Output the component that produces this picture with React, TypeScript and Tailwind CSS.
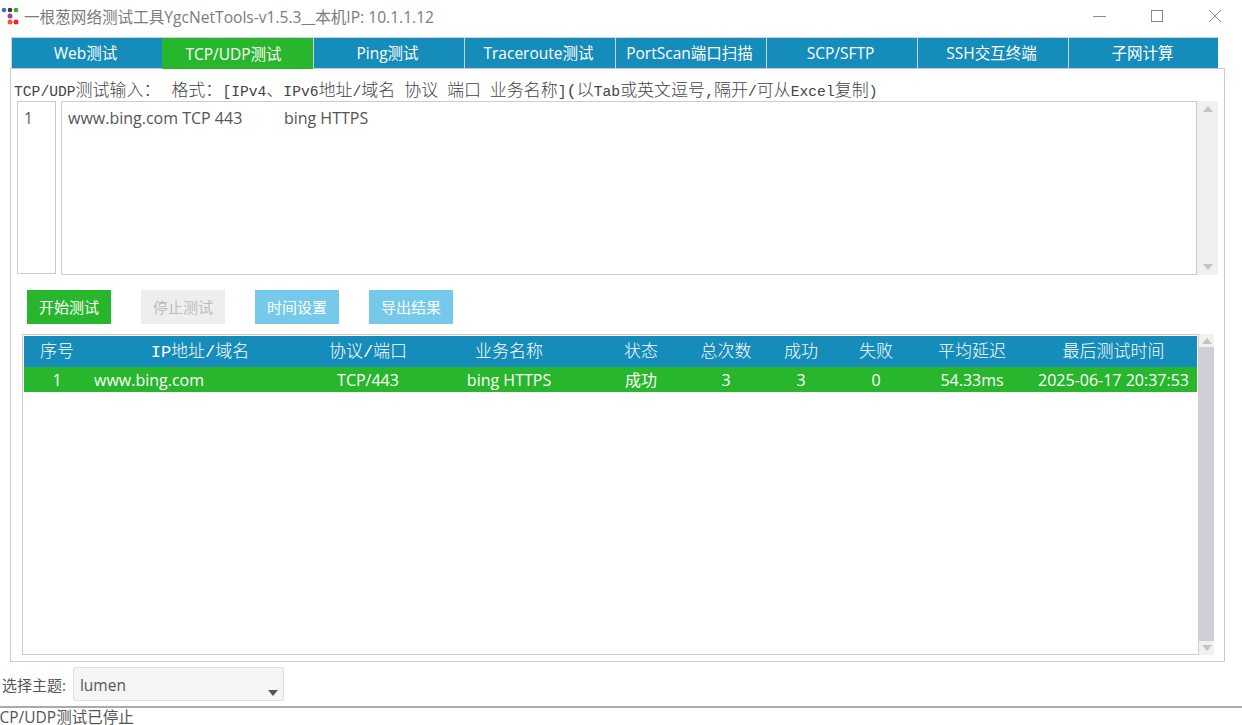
const tabs = ["Web测试", "TCP/UDP测试", "Ping测试", "Traceroute测试", "PortScan端口扫描", "SCP/SFTP", "SSH交互终端", "子网计算"];
const headers = ["序号", "IP地址/域名", "协议/端口", "业务名称", "状态", "总次数", "成功", "失败", "平均延迟", "最后测试时间"];
const row = ["1", "www.bing.com", "TCP/443", "bing HTTPS", "成功", "3", "3", "0", "54.33ms", "2025-06-17 20:37:53"];

const AppIcon = () => (
  <svg width="19" height="19" viewBox="0 0 19 19" className="shrink-0">
    <circle cx="3" cy="3" r="2.3" fill="#2f6fc5" />
    <circle cx="9" cy="3" r="2.3" fill="#3a3a3a" />
    <circle cx="15" cy="3" r="2.3" fill="#3aa63a" />
    <circle cx="9" cy="9" r="2.5" fill="#8e44ad" />
    <circle cx="9" cy="15" r="2.5" fill="#f0592a" />
    <circle cx="15" cy="15" r="2.5" fill="#e8262d" />
  </svg>
);

const Arrow = ({ down = false, color = "#c4c4c4" }: { down?: boolean; color?: string }) => (
  <svg width="10" height="6" viewBox="0 0 10 6">
    <path d={down ? "M0 0 L5 6 L10 0 Z" : "M0 6 L5 0 L10 6 Z"} fill={color} />
  </svg>
);

const Latin = ({ children }: { children: string }) => <span className="text-[14.67px]">{children}</span>;

const App = () => {
  return (
    <div className="w-[1242px] h-[725px] overflow-hidden bg-white flex flex-col font-['Open_Sans','Noto_Sans_CJK_SC',sans-serif] text-[#555]">
      {/* title bar */}
      <div className="h-[37px] shrink-0 flex items-start pt-[7px] pl-px">
        <AppIcon />
        <span className="ml-[4px] text-[15.6px] leading-[20px] text-[#7b7b7b]">一根葱网络测试工具YgcNetTools-v1.5.3__本机IP: 10.1.1.12</span>
        <div className="ml-auto flex items-center h-[18px]">
          <div className="w-[13px] h-px bg-[#8a8a8a] mr-[45px]"></div>
          <div className="w-[12px] h-[12px] border border-[#8a8a8a] mr-[45px]"></div>
          <svg width="14" height="14" viewBox="0 0 14 14" className="mr-[20px]">
            <path d="M1 1 L13 13 M13 1 L1 13" stroke="#8a8a8a" strokeWidth="1" fill="none" />
          </svg>
        </div>
      </div>

      {/* tabs */}
      <div className="flex items-start ml-[11px] h-[32px] shrink-0 -mb-px relative z-10">
        {tabs.map((t) => (
          <div
            key={t}
            className={
              t === "TCP/UDP测试"
                ? "w-[151px] h-[32px] border-t border-[#c9d3da] bg-[#28b62c] text-white text-[15.5px] flex items-center justify-center pr-[8px] pt-[2px]"
                : t === "子网计算"
                  ? "w-[150px] h-[31px] border-t border-l border-[#c9d3da] bg-[#158cba] text-white text-[15.5px] flex items-center justify-center pr-[2px] pt-[2px]"
                  : "w-[151px] h-[31px] border-t border-l border-[#c9d3da] bg-[#158cba] text-white text-[15.5px] flex items-center justify-center pr-[3px] pt-[2px]"
            }
          >
            {t}
          </div>
        ))}
      </div>

      {/* panel */}
      <div className="ml-[10px] w-[1215px] h-[594px] shrink-0 border border-[#ccc] flex flex-col">
        <div className="h-[32px] shrink-0 pl-[3px] pt-[13px] text-[17px] leading-[20px] text-[#444] whitespace-pre font-['Liberation_Mono','Noto_Sans_CJK_SC',monospace] font-light">
          <Latin>TCP/UDP</Latin>测试输入：<span className="mr-[2px]"><Latin> </Latin></span>格式：<Latin>[IPv4</Latin>、<Latin>IPv6</Latin>地址<Latin>/</Latin>域名<Latin> </Latin>协议<Latin> </Latin>端口<Latin> </Latin>业务名称<Latin>]</Latin>(以<Latin>Tab</Latin>或英文逗号<Latin>,</Latin>隔开<Latin>/</Latin>可从<Latin>Excel</Latin>复制<Latin>)</Latin>
        </div>

        {/* input */}
        <div className="flex ml-[6px] h-[174px] shrink-0">
          <div className="w-[39px] h-[173px] border border-[#ccc] pl-[6px] pt-[6px] text-[15.5px] leading-[20px]">1</div>
          <div className="ml-[5px] w-[1136px] border border-[#ccc] pl-[6px] pt-[6px] text-[16px] leading-[20px] whitespace-pre">
            www.bing.com TCP 443{"          "}bing HTTPS
          </div>
          <div className="w-[21px] bg-[#f0f0f0] flex flex-col items-center justify-between py-[5px]">
            <Arrow />
            <Arrow down />
          </div>
        </div>

        {/* buttons */}
        <div className="flex ml-[16px] mt-[15px] gap-[30px] shrink-0">
          <div className="w-[84px] h-[34px] bg-[#28b62c] text-white text-[15px] flex items-center justify-center">开始测试</div>
          <div className="w-[84px] h-[34px] bg-[#eeeeee] text-[#bdbdbd] text-[15px] flex items-center justify-center">停止测试</div>
          <div className="w-[84px] h-[34px] bg-[#75caeb] text-white text-[15px] flex items-center justify-center">时间设置</div>
          <div className="w-[84px] h-[34px] bg-[#75caeb] text-white text-[15px] flex items-center justify-center">导出结果</div>
        </div>

        {/* table */}
        <div className="flex ml-[11px] mt-[10px] h-[321px] shrink-0">
          <div className="w-[1177px] border border-[#ccc] p-px">
            <div className="grid grid-cols-[66px_220px_116px_166px_98px_72px_78px_72px_120px_163px] h-[31px] pt-[2px] bg-[#158cba] text-white text-[17px] font-light items-center text-center font-['Liberation_Mono','Noto_Sans_CJK_SC',monospace]">
              {headers.map((h) => (
                <div key={h}>{h}</div>
              ))}
            </div>
            <div className="grid grid-cols-[66px_70px_150px_116px_166px_98px_72px_78px_72px_120px_163px] h-[25px] bg-[#28b62c] text-white text-[16px] items-center text-center">
              {row.map((c, i) =>
                i === 1 ? (
                  <div key={i} className="col-span-2 text-left pl-[4px]">{c}</div>
                ) : (
                  <div key={i}>{c}</div>
                ),
              )}
            </div>
          </div>
          <div className="w-[15px] flex flex-col">
            <div className="h-[13px] bg-[#f1f1f1] flex items-center justify-center"><Arrow /></div>
            <div className="flex-1 bg-[#cdd0d6]"></div>
            <div className="h-[14px] bg-[#f1f1f1] flex items-center justify-center"><Arrow down /></div>
          </div>
        </div>
      </div>

      {/* theme */}
      <div className="h-[44px] shrink-0 flex items-start pt-[5px] pl-[2px]">
        <span className="text-[15px] leading-[36px] text-[#555]">选择主题:</span>
        <div className="ml-[7px] w-[211px] h-[34px] bg-[#f5f5f5] border border-[#ddd] rounded-[2px] relative flex items-center pl-[6px] pt-[3px] text-[15.5px]">
          lumen
          <div className="absolute right-[5px] bottom-[4px]"><Arrow down color="#555" /></div>
        </div>
      </div>

      {/* status */}
      <div className="flex-1 border-t-2 border-[#aaa] text-[15.5px] leading-[19px] whitespace-nowrap -ml-[9px] text-[#555]">
        TCP/UDP测试已停止
      </div>
    </div>
  );
};

export default App;
